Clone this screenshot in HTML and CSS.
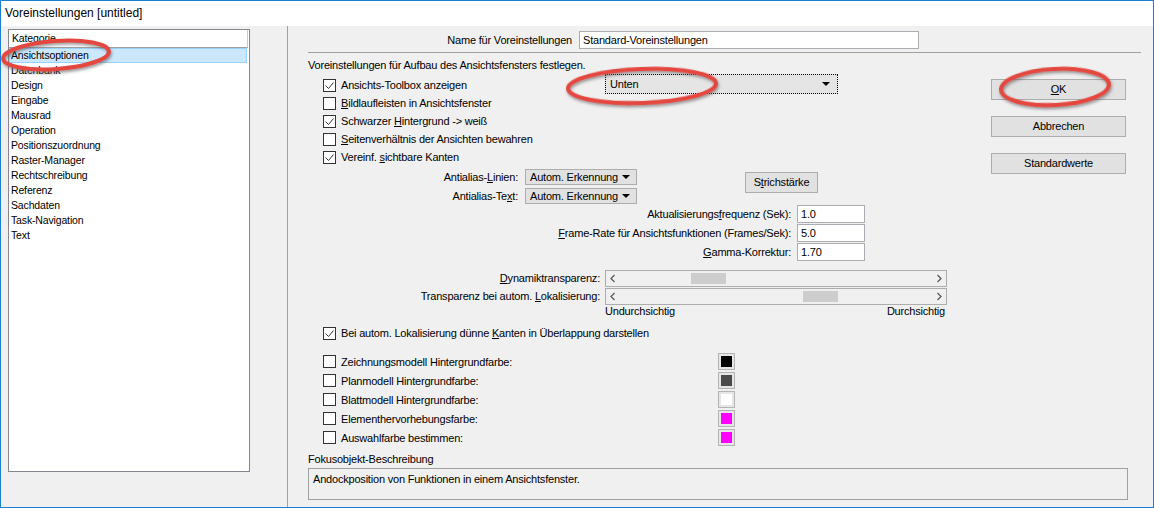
FILE: index.html
```html
<!DOCTYPE html>
<html>
    <head>
        <meta charset="utf-8">
        <title>Voreinstellungen</title>
        <link rel="stylesheet" href="styles.css">
    </head>
    <body>
        <div class="window">
            <div class="titlebar">Voreinstellungen [untitled]</div>
            <div class="dialog">
                <!-- Kategorien links -->
                <div class="side">
                    <div class="catlist">
                        <div class="cathead">Kategorie</div>
                        <div class="catitem sel">Ansichtsoptionen</div>
                        <div class="catitem">Datenbank</div>
                        <div class="catitem">Design</div>
                        <div class="catitem">Eingabe</div>
                        <div class="catitem">Mausrad</div>
                        <div class="catitem">Operation</div>
                        <div class="catitem">Positionszuordnung</div>
                        <div class="catitem">Raster-Manager</div>
                        <div class="catitem">Rechtschreibung</div>
                        <div class="catitem">Referenz</div>
                        <div class="catitem">Sachdaten</div>
                        <div class="catitem">Task-Navigation</div>
                        <div class="catitem">Text</div>
                    </div>
                </div>

                <div class="main">
                    <div class="namerow">
                        <label>Name für Voreinstellungen</label>
                        <div class="field namefield">Standard-Voreinstellungen</div>
                    </div>
                    <div class="rule"></div>

                    <div class="columns">
                        <div class="opts">
                            <p class="intro">Voreinstellungen für Aufbau des Ansichtsfensters festlegen.</p>
                            <div class="checks">
                                <div class="check">
                                    <span class="cb"><svg width="11" height="11"><polyline points="1.5,5.5 4.5,8.5 9.5,2.5" fill="none" stroke="#333" stroke-width="1"/></svg></span>
                                    <span class="txt wide">Ansichts-Toolbox anzeigen</span>
                                    <div class="combo focus">Unten<i class="arrow"></i></div>
                                </div>
                                <div class="check">
                                    <span class="cb"></span>
                                    <span class="txt"><u>B</u>ildlaufleisten in Ansichtsfenster</span>
                                </div>
                                <div class="check">
                                    <span class="cb"><svg width="11" height="11"><polyline points="1.5,5.5 4.5,8.5 9.5,2.5" fill="none" stroke="#333" stroke-width="1"/></svg></span>
                                    <span class="txt">Schwarzer <u>H</u>intergrund -&gt; weiß</span>
                                </div>
                                <div class="check">
                                    <span class="cb"></span>
                                    <span class="txt"><u>S</u>eitenverhältnis der Ansichten bewahren</span>
                                </div>
                                <div class="check">
                                    <span class="cb"><svg width="11" height="11"><polyline points="1.5,5.5 4.5,8.5 9.5,2.5" fill="none" stroke="#333" stroke-width="1"/></svg></span>
                                    <span class="txt">Vereinf. <u>s</u>ichtbare Kanten</span>
                                </div>
                            </div>

                            <div class="aa">
                                <div class="aa-grid">
                                    <div class="aa-row">
                                        <label>Antialias-<u>L</u>inien:</label>
                                        <div class="combo small">Autom. Erkennung<i class="arrow"></i></div>
                                    </div>
                                    <div class="aa-row">
                                        <label>Antialias-Te<u>x</u>t:</label>
                                        <div class="combo small">Autom. Erkennung<i class="arrow"></i></div>
                                    </div>
                                </div>
                                <div class="btn stroke">S<u>t</u>richstärke</div>
                            </div>

                            <div class="nums">
                                <div class="num-row">
                                    <label>Aktualisierungs<u>f</u>requenz (Sek):</label>
                                    <div class="field numfield">1.0</div>
                                </div>
                                <div class="num-row">
                                    <label><u>F</u>rame-Rate für Ansichtsfunktionen (Frames/Sek):</label>
                                    <div class="field numfield">5.0</div>
                                </div>
                                <div class="num-row">
                                    <label><u>G</u>amma-Korrektur:</label>
                                    <div class="field numfield">1.70</div>
                                </div>
                            </div>

                            <div class="sliders">
                                <div class="slider-row">
                                    <label><u>D</u>ynamiktransparenz:</label>
                                    <div class="hbar">
                                        <svg class="chev" width="6" height="9"><polyline points="4.5,1 1,4.5 4.5,8" fill="none" stroke="#555" stroke-width="1.2"/></svg>
                                        <div class="track"><span class="thumb" style="margin-left:71px"></span></div>
                                        <svg class="chev" width="6" height="9"><polyline points="1.5,1 5,4.5 1.5,8" fill="none" stroke="#555" stroke-width="1.2"/></svg>
                                    </div>
                                </div>
                                <div class="slider-row">
                                    <label>Transparenz bei autom. <u>L</u>okalisierung:</label>
                                    <div class="hbar">
                                        <svg class="chev" width="6" height="9"><polyline points="4.5,1 1,4.5 4.5,8" fill="none" stroke="#555" stroke-width="1.2"/></svg>
                                        <div class="track"><span class="thumb" style="margin-left:183px"></span></div>
                                        <svg class="chev" width="6" height="9"><polyline points="1.5,1 5,4.5 1.5,8" fill="none" stroke="#555" stroke-width="1.2"/></svg>
                                    </div>
                                </div>
                                <div class="scale">
                                    <span>Undurchsichtig</span>
                                    <span>Durchsichtig</span>
                                </div>
                            </div>

                            <div class="check overlap">
                                <span class="cb"><svg width="11" height="11"><polyline points="1.5,5.5 4.5,8.5 9.5,2.5" fill="none" stroke="#333" stroke-width="1"/></svg></span>
                                <span class="txt">Bei autom. Lokalisierung dünne <u>K</u>anten in Überlappung darstellen</span>
                            </div>

                            <div class="colors">
                                <div class="check">
                                    <span class="cb"></span>
                                    <span class="txt ctxt">Zeichnungsmodell Hintergrundfarbe:</span>
                                    <span class="sw"><span style="background:#000"></span></span>
                                </div>
                                <div class="check">
                                    <span class="cb"></span>
                                    <span class="txt ctxt">Planmodell Hintergrundfarbe:</span>
                                    <span class="sw"><span style="background:#4b4b4b"></span></span>
                                </div>
                                <div class="check">
                                    <span class="cb"></span>
                                    <span class="txt ctxt">Blattmodell Hintergrundfarbe:</span>
                                    <span class="sw"><span style="background:#fff"></span></span>
                                </div>
                                <div class="check">
                                    <span class="cb"></span>
                                    <span class="txt ctxt">Elementhervorhebungsfarbe:</span>
                                    <span class="sw"><span style="background:#ff00ff"></span></span>
                                </div>
                                <div class="check">
                                    <span class="cb"></span>
                                    <span class="txt ctxt">Auswahlfarbe bestimmen:</span>
                                    <span class="sw"><span style="background:#ff00ff"></span></span>
                                </div>
                            </div>
                        </div>

                        <div class="buttons">
                            <div class="btn"><u>O</u>K</div>
                            <div class="btn">Abbrechen</div>
                            <div class="btn">Standardwerte</div>
                        </div>
                    </div>

                    <p class="focus-label">Fokusobjekt-Beschreibung</p>
                    <div class="focus-box">Andockposition von Funktionen in einem Ansichtsfenster.</div>
                </div>
            </div>

            <!-- rote Markierungen -->
            <svg class="marks" width="1154" height="508">
                <defs>
                    <filter id="shade" x="-20%" y="-40%" width="140%" height="180%">
                        <feDropShadow dx="1" dy="2" stdDeviation="1.5" flood-color="#555" flood-opacity="0.6"/>
                    </filter>
                </defs>
                <g fill="none" stroke="#e4473f" stroke-width="4" filter="url(#shade)">
                    <ellipse cx="56" cy="55" rx="53" ry="14" transform="rotate(-4 56 55)"/>
                    <ellipse cx="642" cy="86" rx="74" ry="17" transform="rotate(-2 642 86)"/>
                    <ellipse cx="1055" cy="87" rx="54" ry="18" transform="rotate(-3 1055 87)"/>
                </g>
            </svg>
        </div>
    </body>
</html>
```

FILE: styles.css
```css
*{
    margin: 0;
    padding: 0;
    box-sizing: border-box;
}
body{
    background: #fff;
}
.window{
    position: relative;
    width: 1154px;
    height: 508px;
    border: 1px solid #1a7fd4;
    font-family: "Liberation Sans", Arial, sans-serif;
    font-size: 11px;
    letter-spacing: -0.2px;
    color: #000;
    overflow: hidden;
}
.titlebar{
    height: 25px;
    line-height: 25px;
    padding-left: 4px;
    background: #fff;
    font-size: 12px;
    letter-spacing: 0;
}
.dialog{
    display: flex;
    height: 481px;
    background: #f0f0f0;
}
.side{
    width: 286px;
    padding: 3px 0 0 7px;
}
.catlist{
    width: 242px;
    height: 443px;
    border: 1px solid #828790;
    background: #fff;
    font-size: 10.5px;
    letter-spacing: -0.15px;
}
.cathead{
    width: 239px;
    height: 18px;
    line-height: 17px;
    padding-left: 3px;
    border-right: 1px solid #c8c8c8;
    border-bottom: 1px solid #a0a0a0;
}
.catitem{
    width: 238px;
    height: 15px;
    line-height: 13px;
    padding-left: 1px;
    border: 1px solid transparent;
    white-space: nowrap;
}
.catitem.sel{
    background: #cce8ff;
    border-color: #99d1ff;
}
.main{
    flex: 1;
    border-left: 1px solid #a0a0a0;
    padding: 5px 0 0 20px;
}
.namerow{
    display: flex;
    align-items: center;
    height: 18px;
}
.namerow label{
    width: 264px;
    text-align: right;
}
.field{
    height: 18px;
    line-height: 16px;
    padding-left: 3px;
    background: #fff;
    border: 1px solid #abadb3;
    white-space: nowrap;
}
.namefield{
    width: 340px;
    margin-left: 7px;
}
.rule{
    width: 833px;
    height: 1px;
    margin-top: 3px;
    background: #a0a0a0;
}
.columns{
    display: flex;
}
.opts{
    width: 660px;
}
.intro{
    margin-top: 5px;
    line-height: 14px;
}
.checks{
    margin-top: 4px;
    padding-left: 15px;
}
.check{
    display: flex;
    align-items: center;
    height: 18px;
    white-space: nowrap;
}
.cb{
    display: flex;
    width: 13px;
    height: 13px;
    border: 1px solid #333;
    background: #fff;
    margin-right: 5px;
    flex: none;
}
.txt.wide{
    width: 264px;
}
.combo{
    position: relative;
    flex: none;
    height: 20px;
    line-height: 18px;
    padding-left: 4px;
    background: #e5e5e5;
    border: 1px solid #adadad;
    white-space: nowrap;
}
.combo.focus{
    width: 233px;
    border: 1px dotted #000;
    margin-top: -3px;
}
.combo.small{
    width: 112px;
    height: 16px;
    line-height: 14px;
    background: #e1e1e1;
}
.arrow{
    position: absolute;
    right: 6px;
    top: 50%;
    margin-top: -2px;
    border-left: 4px solid transparent;
    border-right: 4px solid transparent;
    border-top: 4px solid #000;
}
.combo.focus .arrow{
    right: 7px;
}
.aa{
    display: flex;
    margin-top: 1px;
}
.aa-row{
    display: flex;
    align-items: center;
    height: 19px;
}
.aa-row label,
.num-row label,
.slider-row label{
    text-align: right;
    white-space: nowrap;
}
.aa-row label{
    width: 210px;
    margin-right: 7px;
}
.btn{
    width: 135px;
    height: 21px;
    line-height: 19px;
    text-align: center;
    background: #e1e1e1;
    border: 1px solid #adadad;
    white-space: nowrap;
}
.btn.stroke{
    width: 73px;
    margin: 5px 0 0 108px;
}
.num-row{
    display: flex;
    height: 19px;
}
.num-row label{
    width: 483px;
    margin-right: 6px;
    line-height: 18px;
}
.numfield{
    width: 68px;
}
.sliders{
    margin-top: 7px;
}
.slider-row{
    display: flex;
    align-items: center;
    height: 18px;
}
.slider-row label{
    width: 292px;
    margin-right: 5px;
}
.hbar{
    display: flex;
    align-items: center;
    width: 342px;
    height: 17px;
    padding: 0 4px;
    border: 1px solid #adadad;
    background: #f0f0f0;
}
.track{
    flex: 1;
    height: 11px;
    margin: 0 4px;
}
.thumb{
    display: block;
    width: 35px;
    height: 11px;
    background: #cdcdcd;
}
.scale{
    display: flex;
    justify-content: space-between;
    width: 340px;
    margin: -1px 0 0 297px;
    line-height: 14px;
}
.check.overlap{
    margin-top: 6px;
    padding-left: 15px;
}
.colors{
    margin-top: 10px;
    padding-left: 15px;
}
.colors .check{
    height: 19px;
}
.ctxt{
    width: 377px;
}
.sw{
    display: flex;
    width: 17px;
    height: 17px;
    padding: 2px;
    border: 1px solid #b4b4b4;
    background: #e6e6e6;
}
.sw span{
    flex: 1;
}
.buttons{
    margin-left: 23px;
    padding-top: 26px;
}
.buttons .btn{
    margin-bottom: 16px;
}
.focus-label{
    margin-top: 5px;
    line-height: 14px;
}
.focus-box{
    width: 820px;
    height: 32px;
    margin-top: 2px;
    padding: 3px 4px;
    line-height: 14px;
    border: 1px solid #a0a0a0;
}
.marks{
    position: absolute;
    left: -1px;
    top: -1px;
    pointer-events: none;
}
```
